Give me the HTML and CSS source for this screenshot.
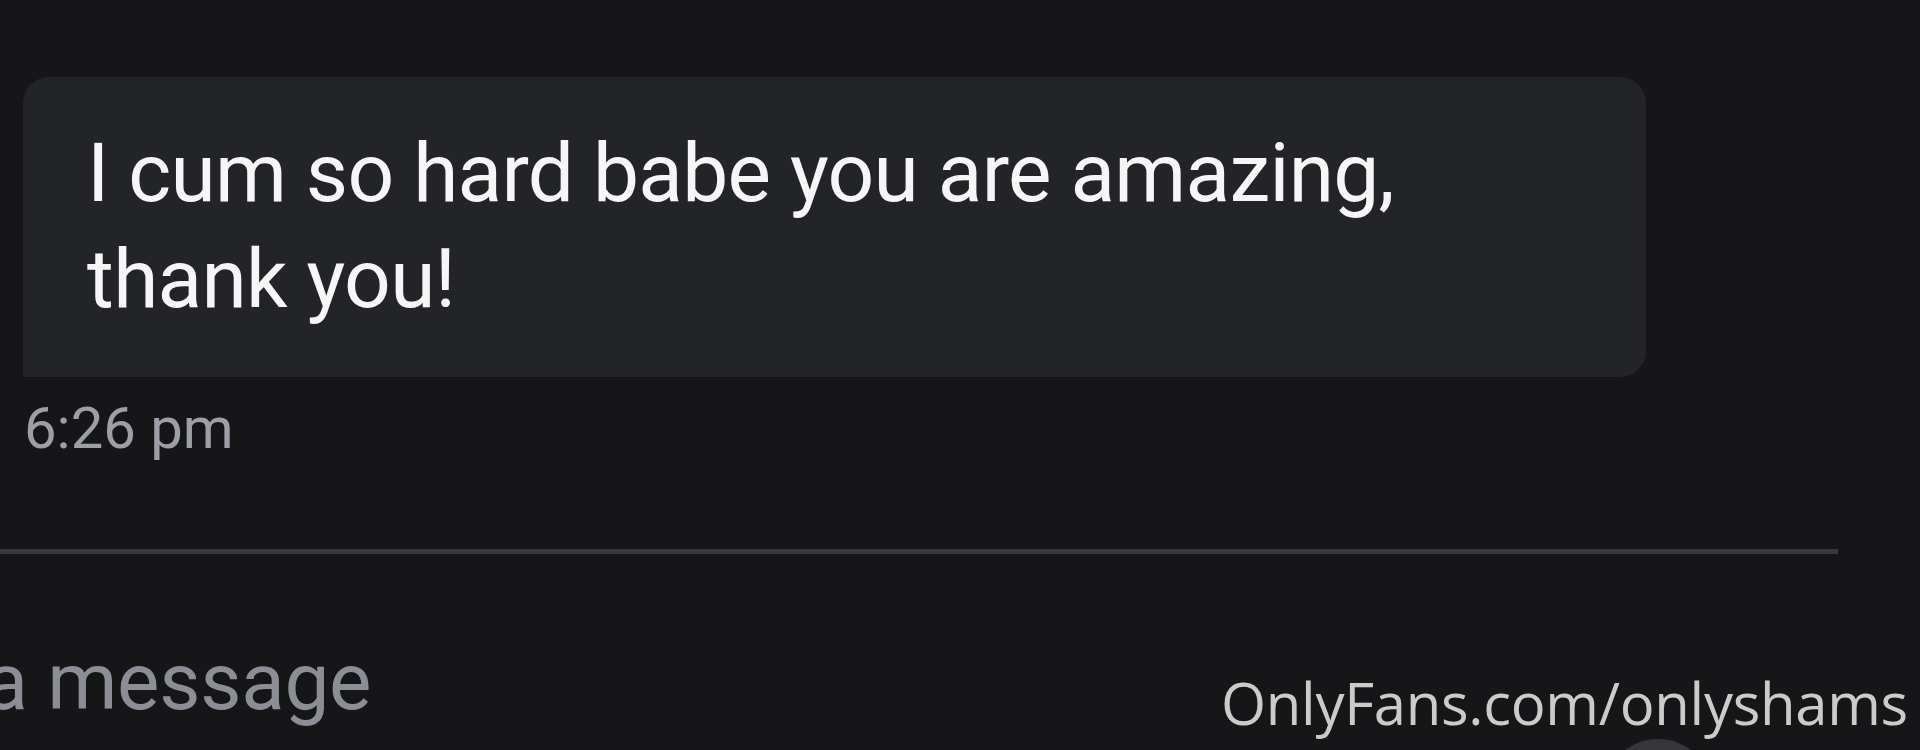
FILE: index.html
```html
<!DOCTYPE html>
<html lang="en">
<head>
    <meta charset="UTF-8">
    <meta name="viewport" content="width=device-width, initial-scale=1.0">
    <title>Chat</title>
    <link rel="stylesheet" href="styles.css">
</head>

<body>
    <div class="chat">
        <div class="bubble">
            <p>I cum so hard babe you are amazing,<br>thank you!</p>
        </div>
        <div class="time">6:26 pm</div>
    </div>

    <div class="divider"></div>

    <div class="composer">
        <div class="placeholder">Type a message</div>
        <div class="send"></div>
    </div>

    <div class="watermark">OnlyFans.com/onlyshams</div>
</body>
</html>
```

FILE: styles.css
```css
html, body {
    margin: 0;
    height: 100%;
    overflow: hidden;
}

body {
    background: #161618;
    font-family: Roboto, "Liberation Sans", sans-serif;
    position: relative;
}

.chat {
    padding-top: 77px;
}

.bubble {
    margin-left: 23px;
    width: 1623px;
    box-sizing: border-box;
    padding: 43px 40px 45px 64px;
    background: #232428;
    border-radius: 26px 26px 26px 0;
}
.bubble p {
    margin: 0;
    color: #f6f6f7;
    font-size: 82px;
    line-height: 106px;
    letter-spacing: -0.7px;
}

.time {
    margin: 18px 0 0 24px;
    color: #9c9fa5;
    font-size: 58px;
    line-height: 66px;
}

.divider {
    margin-top: 88px;
    width: 1838px;
    height: 5px;
    background: #39393c;
}

.composer {
    display: flex;
    align-items: flex-start;
    margin-top: 80px;
}
.placeholder {
    margin-left: -204px;
    color: #8b8e95;
    font-size: 80px;
    line-height: 96px;
    letter-spacing: -0.3px;
    white-space: nowrap;
}
.send {
    margin: 105px 207px 0 auto;
    width: 110px;
    height: 110px;
    border-radius: 50%;
    background: #36363a;
    flex-shrink: 0;
}

.watermark {
    position: absolute;
    left: 1221px;
    top: 674px;
    color: #cbcbcb;
    font-family: "Open Sans", sans-serif;
    font-size: 58px;
    letter-spacing: -0.3px;
    line-height: 1;
    white-space: nowrap;
}
```
